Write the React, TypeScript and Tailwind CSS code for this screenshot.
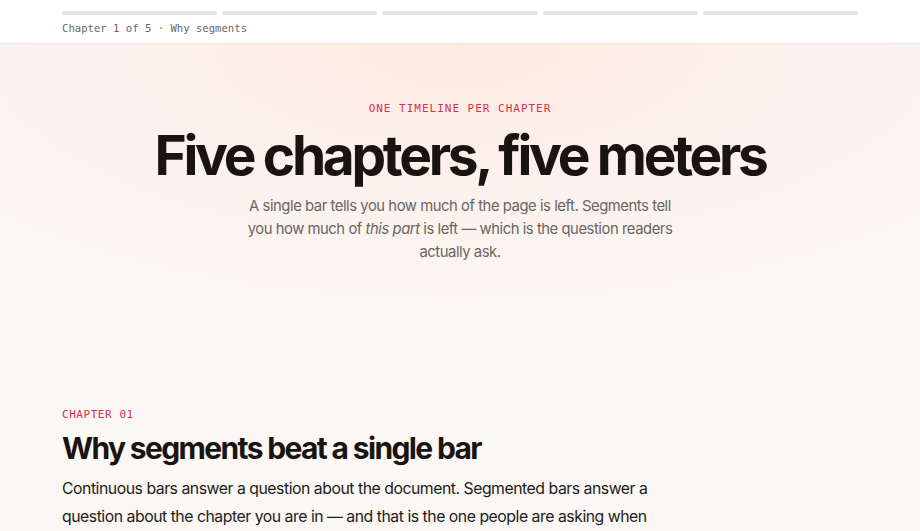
import React from "react";

const chapters = [
  { id: 1, title: "Why segments" },
  { id: 2, title: "Measuring" },
  { id: 3, title: "Layout" },
  { id: 4, title: "Motion" },
  { id: 5, title: "Wrap-up" },
];

const mono = { fontFamily: '"DejaVu Sans Mono", "Liberation Mono", monospace' };

const ProgressHeader = ({ current }: { current: number }) => {
  return (
    <header className="sticky top-0 z-10 bg-white border-b border-[#ece7e4]">
      <div className="mx-auto max-w-[796px] pt-[11px] pb-[8px]">
        <div className="flex gap-[5px]">
          {chapters.map((c) => (
            <div key={c.id} className="h-[4px] flex-1 rounded-full bg-[#e6e4e2]" />
          ))}
        </div>
        <p className="mt-[6px] text-[10.6px] leading-[14px] text-[#6d6661]" style={mono}>
          Chapter {current} of {chapters.length} · {chapters[current - 1].title}
        </p>
      </div>
    </header>
  );
};

export default function App() {
  return (
    <div
      className="min-h-screen bg-[#fbf7f5] text-[#1a1411]"
      style={{ fontFamily: 'Inter, "Noto Sans", sans-serif' }}
    >
      <ProgressHeader current={1} />
      <main className="bg-[radial-gradient(ellipse_70%_45%_at_50%_0%,#fdebe2_0%,#fbf7f5_100%)]">
        <section className="mx-auto max-w-[796px] pt-[58px] pb-[144px] text-center">
          <p className="text-[11px] leading-[14px] tracking-[0.09em] text-[#d8304d]" style={mono}>
            ONE TIMELINE PER CHAPTER
          </p>
          <h1 className="mt-[9px] text-[55px] leading-[60px] font-bold tracking-[-0.06em] text-[#1a1411]">
            Five chapters, five meters
          </h1>
          <p className="mx-auto mt-[10px] max-w-[432px] text-[14.8px] leading-[23px] tracking-[-0.03em] text-[#6b6461]">
            A single bar tells you how much of the page is left. Segments tell you how much of{" "}
            <em>this part</em> is left — which is the question readers actually ask.
          </p>
        </section>
        <section className="mx-auto max-w-[796px] pb-20">
          <p className="text-[11px] leading-[14px] tracking-[0.05em] text-[#d8304d]" style={mono}>
            CHAPTER 01
          </p>
          <h2 className="mt-[8px] text-[30px] leading-[36px] font-bold tracking-[-0.055em]">
            Why segments beat a single bar
          </h2>
          <p className="mt-[9px] max-w-[594px] text-[15.8px] leading-[28px] tracking-[-0.03em] text-[#221c19]">
            Continuous bars answer a question about the document. Segmented bars answer a
            question about the chapter you are in — and that is the one people are asking when
            they glance at the top of the page. Five short meters make every part feel finishable.
          </p>
        </section>
      </main>
    </div>
  );
}
